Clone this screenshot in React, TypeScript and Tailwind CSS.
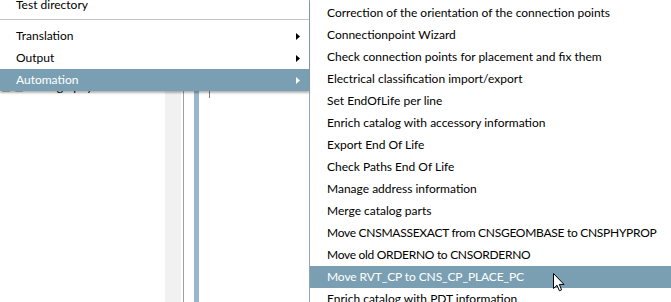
const leftItems = [
  { label: 'Translation', sub: true },
  { label: 'Output', sub: true },
  { label: 'Automation', sub: true, active: true },
];

// caps-heavy labels get a tighter spacing to match the original UI font widths
const automationItems = [
  { label: 'Correction of the orientation of the connection points' },
  { label: 'Connectionpoint Wizard' },
  { label: 'Check connection points for placement and fix them' },
  { label: 'Electrical classification import/export' },
  { label: 'Set EndOfLife per line' },
  { label: 'Enrich catalog with accessory information' },
  { label: 'Export End Of Life' },
  { label: 'Check Paths End Of Life' },
  { label: 'Manage address information' },
  { label: 'Merge catalog parts' },
  { label: 'Move CNSMASSEXACT from CNSGEOMBASE to CNSPHYPROP', tight: 'tracking-[-0.28px]' },
  { label: 'Move old ORDERNO to CNSORDERNO', tight: 'tracking-[-0.3px]' },
  { label: 'Move RVT_CP to CNS_CP_PLACE_PC', active: true, tight: 'tracking-[-0.1px]' },
  { label: 'Enrich catalog with PDT information' },
];

function Arrow({ white }: { white?: boolean }) {
  return (
    <svg width="4" height="7" viewBox="0 0 4 7" className="shrink-0">
      <path d="M0 0 L4 3.5 L0 7 Z" fill={white ? '#ffffff' : '#000000'} />
    </svg>
  );
}

function Cursor() {
  return (
    <svg width="12" height="19" viewBox="0 0 12 19" className="absolute left-[553px] top-[273px]">
      <path
        d="M0.5 0.5 L0.5 15.5 L4 12.2 L6.4 17.8 L8.6 16.9 L6.3 11.4 L11 11.4 Z"
        fill="#ffffff"
        stroke="#000000"
        strokeWidth="1"
        strokeLinejoin="miter"
      />
    </svg>
  );
}

export default function App() {
  return (
    <div
      className="relative w-[671px] h-[302px] overflow-hidden bg-white flex text-[12px] text-black"
      style={{ fontFamily: 'Lato, "Noto Sans", sans-serif' }}
    >
      {/* left: parent menu over the app window */}
      <div className="w-[309px] shrink-0 flex flex-col">
        <div className="relative z-10 bg-white shadow-[0_2px_2px_rgba(0,0,0,0.3)] pt-px">
          <div className="h-[22px] -mt-[7px] flex items-center pl-[16px]">Test directory</div>
          <div className="h-[9px] flex items-start pt-[3px]">
            <div className="w-full h-px bg-[#c5c5c5]" />
          </div>
          {leftItems.map((item) => (
            <div
              key={item.label}
              className={`h-[22px] flex items-center justify-between pl-[16px] pr-[9px] ${
                item.active ? 'bg-[#7a9fb2] text-white' : ''
              }`}
            >
              <span>{item.label}</span>
              {item.sub && <Arrow white={item.active} />}
            </div>
          ))}
        </div>
        {/* background application window */}
        <div className="flex-1 flex">
          <div className="w-[165px] h-[3px] overflow-hidden relative">
            <span className="absolute left-[1px] -top-[10px] leading-[12px] whitespace-nowrap">
              ⊟ ⊟ Bibliography
            </span>
          </div>
          <div className="w-[16px] bg-[#f1f1f1]" />
          <div className="w-[2px]" />
          <div className="w-px bg-[#a0a0a0]" />
          <div className="w-[10px]" />
          <div className="w-[5px] bg-[#98b7cc]" />
          <div className="w-[10px]" />
          <div className="w-px h-[7px] bg-[#808080]" />
        </div>
      </div>

      {/* right: Automation submenu */}
      <div className="flex-1 bg-white border-l border-[#8fa7b6] pt-[2px]">
        {automationItems.map((item) => (
          <div
            key={item.label}
            className={`h-[22px] flex items-center pl-[17px] whitespace-nowrap ${item.tight ?? ''} ${
              item.active ? 'bg-[#7a9fb2] text-white' : ''
            }`}
          >
            {item.label}
          </div>
        ))}
      </div>

      <Cursor />
    </div>
  );
}
